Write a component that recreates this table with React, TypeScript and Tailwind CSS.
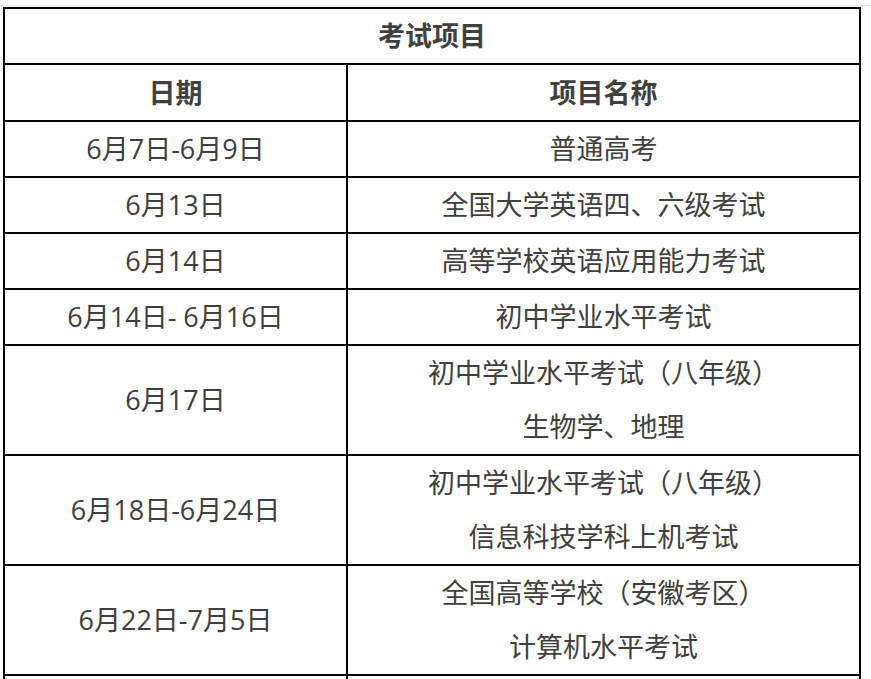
import React from "react";

const rows: { date: string; names: string[] }[] = [
  { date: "6月7日-6月9日", names: ["普通高考"] },
  { date: "6月13日", names: ["全国大学英语四、六级考试"] },
  { date: "6月14日", names: ["高等学校英语应用能力考试"] },
  { date: "6月14日- 6月16日", names: ["初中学业水平考试"] },
  { date: "6月17日", names: ["初中学业水平考试（八年级）", "生物学、地理"] },
  { date: "6月18日-6月24日", names: ["初中学业水平考试（八年级）", "信息科技学科上机考试"] },
  { date: "6月22日-7月5日", names: ["全国高等学校（安徽考区）", "计算机水平考试"] },
];

export default function App() {
  return (
    <div
      className="w-[871px] h-[679px] overflow-hidden bg-white pt-[5px] text-[#404040]"
      style={{ fontFamily: '"Open Sans", "Noto Sans CJK SC", sans-serif' }}
    >
      <div className="h-px bg-[#e2e2e2]" />
      <table className="ml-[3px] mt-[1px] w-[858px] border-collapse border-2 border-black text-[27px] text-center">
        <tbody>
          <tr>
            <td colSpan={2} className="p-0 border-2 border-black font-bold leading-[54px]">
              考试项目
            </td>
          </tr>
          <tr>
            <td className="w-[343px] p-0 border-2 border-black font-bold leading-[55px]">日期</td>
            <td className="p-0 border-2 border-black font-bold leading-[55px]">项目名称</td>
          </tr>
          {rows.map((r, i) => (
            <tr key={i}>
              <td className="p-0 border-2 border-black leading-[54px]">{r.date}</td>
              <td className="p-0 border-2 border-black leading-[54px]">
                {r.names.map((n, j) => (
                  <p key={j}>{n}</p>
                ))}
              </td>
            </tr>
          ))}
          <tr className="h-[56px]">
            <td className="p-0 border-2 border-black" />
            <td className="p-0 border-2 border-black" />
          </tr>
        </tbody>
      </table>
    </div>
  );
}
